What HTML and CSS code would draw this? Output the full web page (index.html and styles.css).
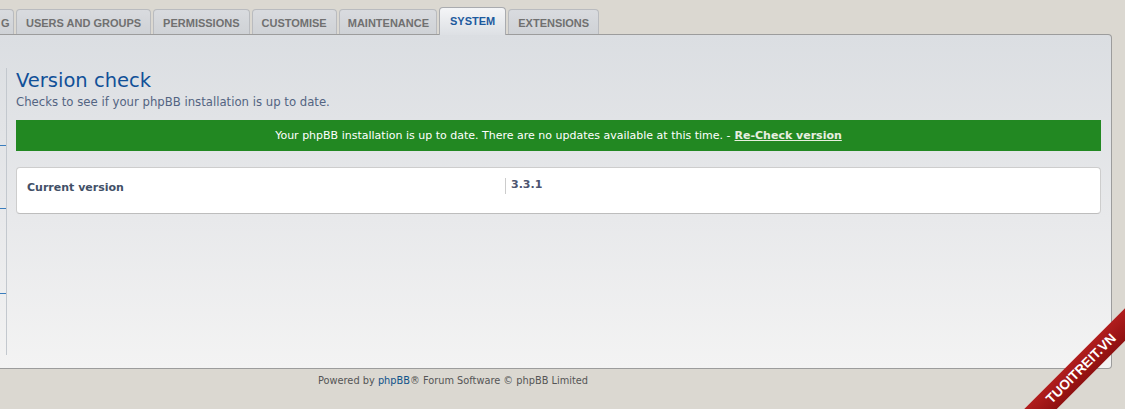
FILE: index.html
```html
<!DOCTYPE html>
<html lang="en">
<head>
<meta charset="utf-8">
<title>Version check</title>
<link rel="stylesheet" href="styles.css">
</head>
<body>
<div class="screen">
  <div class="tabs">
    <div class="tab tab-partial">G</div>
    <div class="tab">USERS AND GROUPS</div>
    <div class="tab">PERMISSIONS</div>
    <div class="tab">CUSTOMISE</div>
    <div class="tab tab-narrow">MAINTENANCE</div>
    <div class="tab active">SYSTEM</div>
    <div class="tab">EXTENSIONS</div>
  </div>
  <div class="panel">
    <div class="menu">
      <div class="menu-seg s1"></div>
      <div class="menu-seg s2"></div>
      <div class="menu-seg s3"></div>
    </div>
    <div class="content">
      <h1 class="title">Version check</h1>
      <p class="lead">Checks to see if your phpBB installation is up to date.</p>
      <div class="success">Your phpBB installation is up to date. There are no updates available at this time. - <a class="recheck" href="#">Re-Check version</a></div>
      <div class="box">
        <div class="row">
          <div class="label">Current version</div>
          <div class="value">3.3.1</div>
        </div>
      </div>
    </div>
  </div>
  <div class="footer">Powered by <a class="footer-link" href="#">phpBB</a>® Forum Software © phpBB Limited</div>
  <div class="ribbon">TUOITREIT.VN</div>
</div>
</body>
</html>
```
FILE: styles.css
```css
html, body {
  margin: 0;
  padding: 0;
  background: #dbd8d1;
}

.screen {
  position: relative;
  width: 1125px;
  height: 409px;
  overflow: hidden;
  background: #dbd8d1;
  font-family: "DejaVu Sans", Verdana, sans-serif;
}

/* Tabs */
.tabs {
  display: flex;
  align-items: flex-end;
  gap: 2px;
  padding-top: 9px;
  height: 25px;
  box-sizing: content-box;
}

.tab {
  position: relative;
  box-sizing: border-box;
  height: 25px;
  padding: 3px 9px 0;
  line-height: 21px;
  border: 1px solid #b9bbbf;
  border-bottom: none;
  border-radius: 4px 4px 0 0;
  background: linear-gradient(#d9dbdf, #cfd2d6);
  color: #707070;
  font-family: "Liberation Sans", Arial, sans-serif;
  font-weight: bold;
  font-size: 11px;
  white-space: nowrap;
}

.tab-partial {
  width: 14px;
  padding: 3px 0 0 1px;
  border-left: none;
  border-top-left-radius: 0;
}

.tab-narrow {
  padding-left: 8px;
  padding-right: 7px;
}

.tab.active {
  z-index: 2;
  height: 28px;
  margin-bottom: -1px;
  padding: 3px 10px 0;
  line-height: 21px;
  border-color: #a9abaf;
  background: linear-gradient(#f4f5f7, #dde0e4);
  color: #1d5a9e;
}

/* Panel */
.panel {
  position: relative;
  z-index: 1;
  display: flex;
  width: 1112px;
  box-sizing: border-box;
  border: 1px solid #9c9c9c;
  border-left: none;
  border-radius: 0 4px 4px 0;
  background: linear-gradient(#dbdee2, #e8e9eb 55%, #f3f3f3);
}

.menu {
  width: 6px;
  margin: 33px 0 13px;
  height: 287px;
  border-right: 1px solid #c3c8ce;
  display: flex;
  flex-direction: column;
}

.menu-seg {
  border-bottom: 1px solid #3a7dbd;
}

.s1 { height: 77px; }
.s2 { height: 62px; }
.s3 { height: 84px; }

.content {
  flex: 1;
  padding: 34px 10px 0 9px;
}

.title {
  margin: 0;
  font-weight: normal;
  font-size: 19.5px;
  line-height: 24px;
  color: #115098;
}

.lead {
  margin: 2px 0 0;
  font-size: 11.7px;
  line-height: 15px;
  color: #536482;
}

.success {
  margin-top: 10px;
  height: 31px;
  display: flex;
  align-items: center;
  justify-content: center;
  background: #228822;
  color: #ffffff;
  font-size: 11px;
}

.recheck {
  margin-left: 4px;
  color: #e8efe0;
  font-weight: bold;
}

.box {
  margin-top: 16px;
  height: 47px;
  box-sizing: border-box;
  padding: 10px 10px 0;
  background: #ffffff;
  border: 1px solid #cdcdcd;
  border-bottom-color: #bdbdbd;
  border-radius: 4px;
}

.row {
  display: flex;
}

.label {
  width: 478px;
  padding-top: 3px;
  font-size: 11px;
  line-height: 14px;
  font-weight: bold;
  color: #425067;
}

.value {
  flex: 1;
  height: 16px;
  padding-left: 5px;
  border-left: 1px solid #cccccc;
  font-size: 11px;
  line-height: 14px;
  font-weight: bold;
  color: #4c5470;
}

/* Footer */
.footer {
  width: 906px;
  padding-top: 5px;
  text-align: center;
  font-size: 9.8px;
  line-height: 14px;
  color: #555555;
}

.footer-link {
  color: #105289;
  text-decoration: none;
}

/* Watermark ribbon */
.ribbon {
  position: absolute;
  left: 981px;
  top: 357px;
  width: 200px;
  height: 23px;
  line-height: 23px;
  text-align: center;
  transform: rotate(-45deg);
  background: linear-gradient(#b11d1d, #8e1010);
  color: #ffffff;
  font-family: "Liberation Sans", Arial, sans-serif;
  font-weight: bold;
  font-size: 13.5px;
  z-index: 5;
}
```
